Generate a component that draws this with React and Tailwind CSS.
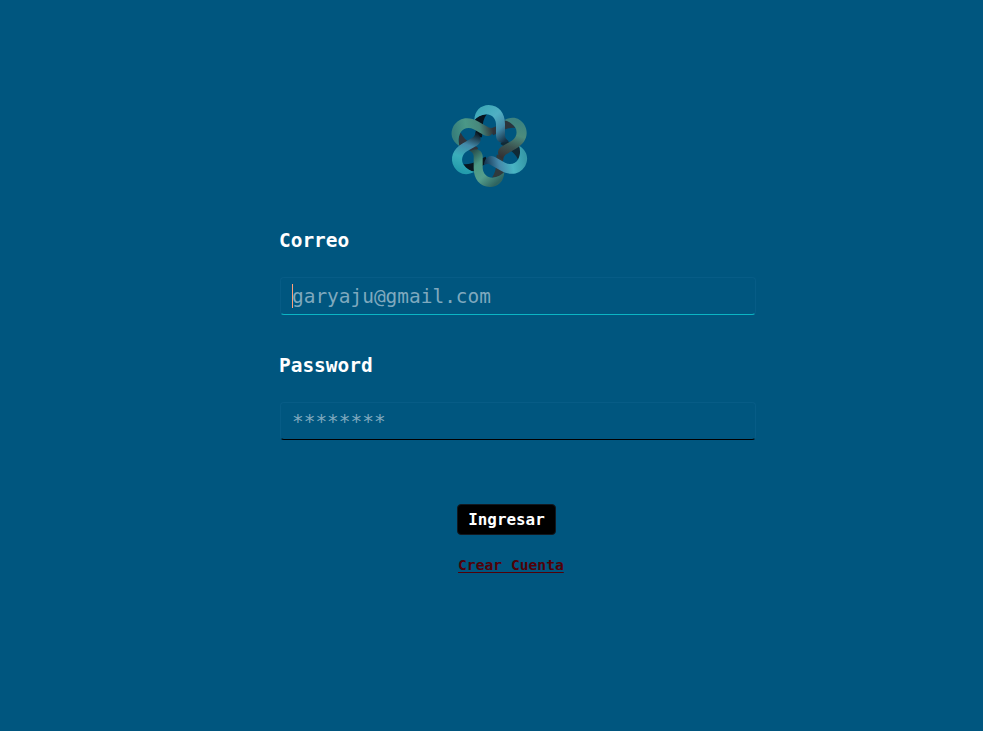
const ribbons = [
  { angle: 180, stops: ['#2f6460', '#559e8c', '#4c9884', '#28504f'] },
  { angle: 240, stops: ['#239cac', '#3aaeba', '#4388a8', '#10232f'] },
  { angle: 300, stops: ['#377e7b', '#4b9887', '#47877c', '#30343a'] },
  { angle: 120, stops: ['#3698a7', '#49b5c4', '#4588aa', '#173c59'] },
  { angle: 60, stops: ['#3d8380', '#4d8b7c', '#3c5350', '#343234'] },
  { angle: 0, stops: ['#3fa9b9', '#50b0c4', '#4389a8', '#153044'] },
];

const folds = [
  { angle: 0, color: '#07131d' },
  { angle: 60, color: '#2c343c' },
  { angle: 120, color: '#102a36' },
  { angle: 180, color: '#303a3d' },
  { angle: 240, color: '#081720' },
  { angle: 300, color: '#30343b' },
];

function Logo() {
  return (
    <svg className="size-[100px]" viewBox="0 0 300 300" aria-label="Logo">
      <defs>
        {ribbons.map(({ angle, stops }) => (
          <linearGradient key={angle} id={`ribbon-${angle}`} gradientUnits="userSpaceOnUse" x1="112" y1="50" x2="190" y2="140">
            <stop offset="0" stopColor={stops[0]} />
            <stop offset=".35" stopColor={stops[1]} />
            <stop offset=".68" stopColor={stops[2]} />
            <stop offset="1" stopColor={stops[3]} />
          </linearGradient>
        ))}
      </defs>
      {folds.map(({ angle, color }) => (
        <path
          key={angle}
          transform={`rotate(${angle} 148 150)`}
          fill={color}
          d="M103 73C112 61 124 56 140 55C131 68 127 82 128 98L126 124L106 124C109 111 107 94 103 84Z"
        />
      ))}
      {ribbons.map(({ angle }) => (
        <path
          key={angle}
          transform={`rotate(${angle} 148 150)`}
          fill={`url(#ribbon-${angle})`}
          d="M103 73C104 43 122 28 146 27C177 28 195 51 195 84L195 121C197 128 200 132 206 135C187 145 169 139 168 119L168 84C167 66 154 55 139 55C123 56 111 64 103 73Z"
        />
      ))}
    </svg>
  );
}

function Field({ label, type, placeholder, line, focused }) {
  return (
    <div className="flex h-[125px] flex-col">
      <label className="-ml-px h-[51px] text-[19.45px] leading-[30px] font-bold text-white">{label}</label>
      <div className="relative h-[38px] w-[476px]">
        <input
          type={type}
          placeholder={placeholder}
          className={`block h-[38px] w-full rounded border border-[#075c86] bg-transparent px-[11px] text-[19.45px] text-white outline-none placeholder:text-[#7fa9be] placeholder:opacity-100 ${line}`}
        />
        {focused && <span className="absolute top-[7px] left-3 h-6 w-px bg-[#ffa07a]" />}
      </div>
    </div>
  );
}

export default function App() {
  return (
    <main className="flex h-[731px] w-[983px] flex-col overflow-hidden bg-[#00567f] pt-24 font-['DejaVu_Sans_Mono',monospace]">
      <div className="flex h-[130px] pl-[440px]">
        <Logo />
      </div>
      <form className="flex flex-col pl-[280px]">
        <Field label="Correo" type="text" placeholder="garyaju@gmail.com" line="border-b-[#0bb5c4]" focused />
        <Field label="Password" type="text" placeholder="********" line="border-b-black" />
        <div className="flex flex-col items-start pt-7 pl-[177px]">
          <button type="button" className="h-[31px] w-[99px] rounded border border-[#111820] bg-black text-[15.9px] leading-7 font-bold text-white">
            Ingresar
          </button>
          <a href="#" className="mt-[18px] ml-px text-[14.65px] leading-6 font-bold text-[#500008] underline decoration-1 underline-offset-2">
            Crear Cuenta
          </a>
        </div>
      </form>
    </main>
  );
}
